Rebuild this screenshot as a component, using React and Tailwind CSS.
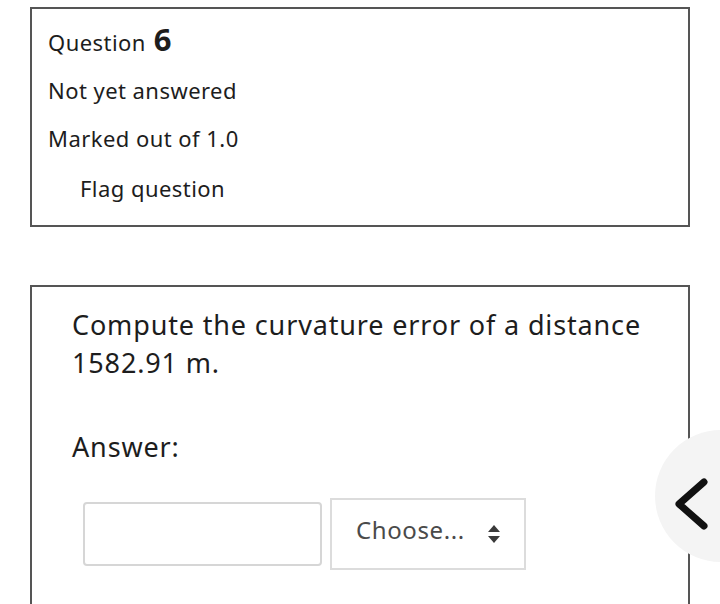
import React from "react";

export default function App() {
  return (
    <div className="relative w-[720px] h-[604px] overflow-hidden bg-white text-[#1d1d1d]" style={{ fontFamily: '"Noto Sans", "Open Sans", sans-serif' }}>
      <div className="pt-[7px] pl-[30px] w-[690px]">
        {/* info box */}
        <div className="border-2 border-[#555] h-[220px] pl-[16px] pt-[7px] tracking-[0.45px]">
          <div className="flex items-baseline gap-[8px] h-[44px]">
            <span className="text-[22px]">Question</span>
            <span className="text-[31px] font-bold">6</span>
          </div>
          <p className="text-[22px] mt-[12px] leading-[36px]">Not yet answered</p>
          <p className="text-[22px] mt-[12px] leading-[36px]">Marked out of 1.0</p>
          <p className="text-[22px] mt-[14px] leading-[36px] pl-[32px]">Flag question</p>
        </div>

        {/* question box */}
        <div className="mt-[58px] border-2 border-[#555] border-b-0 h-[330px] pl-[40px] pr-[20px] pt-[19px]">
          <p className="text-[27px] leading-[38px] tracking-[0.85px]">
            Compute the curvature error of a distance
            <br />
            1582.91 m.
          </p>
          <p className="text-[27px] leading-[38px] mt-[46px] tracking-[0.85px]">Answer:</p>
          <div className="flex items-center gap-[8px] mt-[32px] pl-[11px]">
            <div className="w-[239px] h-[64px] border-2 border-[#d6d6d6] rounded-[4px]" />
            <div className="w-[196px] h-[72px] border-2 border-[#dcdcdc] flex items-center pl-[24px] pb-[8px] gap-[22px]">
              <span className="text-[24px] text-[#4a4a4a] tracking-[0.6px]">Choose...</span>
              <svg width="14" height="20" viewBox="0 0 14 20" className="mt-[8px]">
                <path d="M7 1 L13 8 L1 8 Z" fill="#3a3a3a" />
                <path d="M1 12 L13 12 L7 19 Z" fill="#3a3a3a" />
              </svg>
            </div>
          </div>
        </div>
      </div>

      {/* side pull tab */}
      <div className="absolute left-[655px] top-[430px] w-[132px] h-[132px] rounded-full bg-[#f4f4f4] pl-[16px] pt-[46px]">
        <svg width="40" height="56" viewBox="0 0 40 56">
          <path d="M33 6 L8 28 L33 50" fill="none" stroke="#111" strokeWidth="7" strokeLinecap="round" strokeLinejoin="round" />
        </svg>
      </div>
    </div>
  );
}
